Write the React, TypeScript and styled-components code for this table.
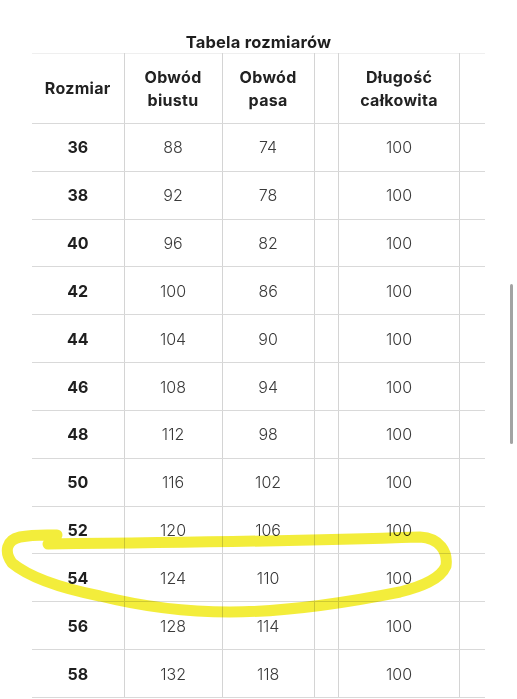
import React from "react";
import styled, { createGlobalStyle } from "styled-components";

const Global = createGlobalStyle`
  html, body { margin: 0; padding: 0; background: #ffffff; }
  body { font-family: Inter, "Noto Sans", sans-serif; color: #222; }
`;

const Page = styled.div`
  position: relative;
  width: 517px;
  height: 699px;
  overflow: hidden;
  display: flex;
  flex-direction: column;
  align-items: flex-start;
`;

const Title = styled.h2`
  align-self: center;
  margin: 32px 0 1px 0;
  font-size: 16.5px;
  line-height: 20px;
  font-weight: 700;
  color: #1e1e1e;
  letter-spacing: 0.2px;
`;

const Table = styled.table`
  margin-left: 32px;
  border-collapse: collapse;
  table-layout: fixed;
  width: 453px;
  border-top: 1px solid #efefef;
`;

const HeadCell = styled.th<{ $w: number; $last?: boolean }>`
  box-sizing: border-box;
  width: ${(p) => p.$w}px;
  height: 70px;
  padding: 0;
  font-size: 16px;
  line-height: 23px;
  font-weight: 700;
  color: #222;
  text-align: center;
  vertical-align: middle;
  border-right: ${(p) => (p.$last ? "none" : "1px solid #d4d4d4")};
  border-bottom: 1px solid #d9d9d9;
  letter-spacing: 0.3px;
`;

const Cell = styled.td<{ $bold?: boolean; $last?: boolean }>`
  height: 46.83px;
  padding: 0;
  text-align: center;
  vertical-align: middle;
  font-size: ${(p) => (p.$bold ? "16px" : "16px")};
  font-weight: ${(p) => (p.$bold ? 700 : 300)};
  color: ${(p) => (p.$bold ? "#1f1f1f" : "#3a3a3a")};
  border-right: ${(p) => (p.$last ? "none" : "1px solid #d4d4d4")};
  border-bottom: 1px solid #d9d9d9;
`;

const Highlight = styled.svg`
  position: absolute;
  left: 0;
  top: 0;
  pointer-events: none;
  mix-blend-mode: multiply;
`;

const ScrollThumb = styled.div`
  position: absolute;
  left: 510px;
  top: 284px;
  width: 3px;
  height: 160px;
  border-radius: 2px;
  background: #a3a3a3;
`;

const cols = [
  { w: 91, label: ["Rozmiar"] },
  { w: 97, label: ["Obwód", "biustu"] },
  { w: 91, label: ["Obwód", "pasa"] },
  { w: 24, label: [] },
  { w: 120, label: ["Długość", "całkowita"] },
  { w: 25, label: [] },
];

const rows: [number, number, number, number][] = [
  [36, 88, 74, 100],
  [38, 92, 78, 100],
  [40, 96, 82, 100],
  [42, 100, 86, 100],
  [44, 104, 90, 100],
  [46, 108, 94, 100],
  [48, 112, 98, 100],
  [50, 116, 102, 100],
  [52, 120, 106, 100],
  [54, 124, 110, 100],
  [56, 128, 114, 100],
  [58, 132, 118, 100],
];

export default function App() {
  return (
    <Page>
      <Global />
      <Title>Tabela rozmiarów</Title>
      <Table>
        <thead>
          <tr>
            {cols.map((c, i) => (
              <HeadCell key={i} $w={c.w} $last={i === cols.length - 1}>
                {c.label.map((l, j) => (
                  <React.Fragment key={j}>
                    {j > 0 && <br />}
                    {l}
                  </React.Fragment>
                ))}
              </HeadCell>
            ))}
          </tr>
        </thead>
        <tbody>
          {rows.map((r) => (
            <tr key={r[0]}>
              <Cell $bold>{r[0]}</Cell>
              <Cell>{r[1]}</Cell>
              <Cell>{r[2]}</Cell>
              <Cell />
              <Cell>{r[3]}</Cell>
              <Cell $last />
            </tr>
          ))}
        </tbody>
      </Table>
      <Highlight width="517" height="699" viewBox="0 0 517 699">
        <path
          d="M48,544 C150,543 300,541 420,537 C440,538 448,552 446,566 C440,580 420,587 400,592 C340,604 280,612 230,612 C180,612 140,606 100,596 C60,588 30,578 12,563 C4,552 6,540 20,537 C35,534 50,535 57,535"
          fill="none"
          stroke="#f2ec2a"
          strokeWidth="11"
          strokeLinecap="round"
          strokeLinejoin="round"
          opacity="0.92"
        />
      </Highlight>
      <ScrollThumb />
    </Page>
  );
}
